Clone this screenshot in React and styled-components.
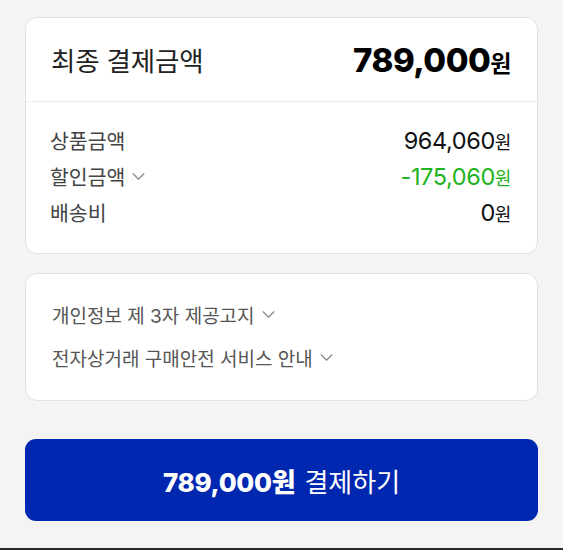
import React from 'react'
import styled, { createGlobalStyle } from 'styled-components'

const GlobalStyle = createGlobalStyle`
  html, body {
    margin: 0;
    padding: 0;
    background: #f4f4f4;
  }
  body {
    font-family: Inter, "Noto Sans CJK KR", sans-serif;
    color: #111;
  }
`

const Page = styled.div`
  height: 550px;
  box-sizing: border-box;
  display: flex;
  flex-direction: column;
  padding: 17px 25px 0;
  gap: 19px;
  border-bottom: 2px solid #2a2a2a;
`

const Card = styled.section`
  background: #fff;
  border: 1px solid #e2e2e2;
  border-radius: 12px;
`

const Header = styled.div`
  height: 83px;
  display: flex;
  align-items: center;
  justify-content: space-between;
  padding: 0 26px 0 25px;
  border-bottom: 1px solid #ececec;
`

const Title = styled.h2`
  margin: 0;
  font-size: 26.5px;
  font-weight: 400;
  color: #222;
  letter-spacing: -0.2px;
`

const Total = styled.div`
  font-size: 33px;
  font-weight: 800;
  color: #000;
  letter-spacing: -0.5px;
  span {
    font-size: 23px;
    font-weight: 700;
  }
`

const Body = styled.div`
  padding: 20px 26px 23px 24px;
`

const Row = styled.div`
  height: 36px;
  display: flex;
  align-items: center;
  justify-content: space-between;
`

const Label = styled.div`
  display: flex;
  align-items: center;
  gap: 6px;
  font-size: 20.5px;
  color: #444;
`

const Amount = styled.div`
  font-size: 23.5px;
  font-weight: 400;
  color: ${p => (p.green ? '#1db320' : '#111')};
  letter-spacing: -0.4px;
  span {
    font-size: 18px;
  }
`

const Notices = styled.div`
  padding: 19px 26px 21px;
`

const Notice = styled.div`
  height: 43px;
  display: flex;
  align-items: center;
  gap: 6px;
  font-size: 19px;
  color: #555;
`

const PayButton = styled.button`
  margin-top: 19px;
  height: 82px;
  border: none;
  border-radius: 11px;
  background: #0027b0;
  color: #fff;
  font-family: inherit;
  font-size: 26px;
  display: flex;
  align-items: center;
  justify-content: center;
  gap: 9px;
  b {
    font-weight: 800;
    letter-spacing: -0.3px;
  }
`

const Chevron = ({ size = 15 }) => (
  <svg width={size} height={size} viewBox="0 0 14 14" fill="none">
    <path d="M2 4.5l5 5 5-5" stroke="#8a8a8a" strokeWidth="1.2" strokeLinecap="round" strokeLinejoin="round" />
  </svg>
)

export default function App() {
  return (
    <>
      <GlobalStyle />
      <Page>
        <Card>
          <Header>
            <Title>최종 결제금액</Title>
            <Total>789,000<span>원</span></Total>
          </Header>
          <Body>
            <Row>
              <Label>상품금액</Label>
              <Amount>964,060<span>원</span></Amount>
            </Row>
            <Row>
              <Label>할인금액 <Chevron /></Label>
              <Amount green>-175,060<span>원</span></Amount>
            </Row>
            <Row>
              <Label>배송비</Label>
              <Amount>0<span>원</span></Amount>
            </Row>
          </Body>
        </Card>
        <Card>
          <Notices>
            <Notice>개인정보 제 3자 제공고지 <Chevron /></Notice>
            <Notice>전자상거래 구매안전 서비스 안내 <Chevron /></Notice>
          </Notices>
        </Card>
        <PayButton>
          <b>789,000원</b> 결제하기
        </PayButton>
      </Page>
    </>
  )
}
